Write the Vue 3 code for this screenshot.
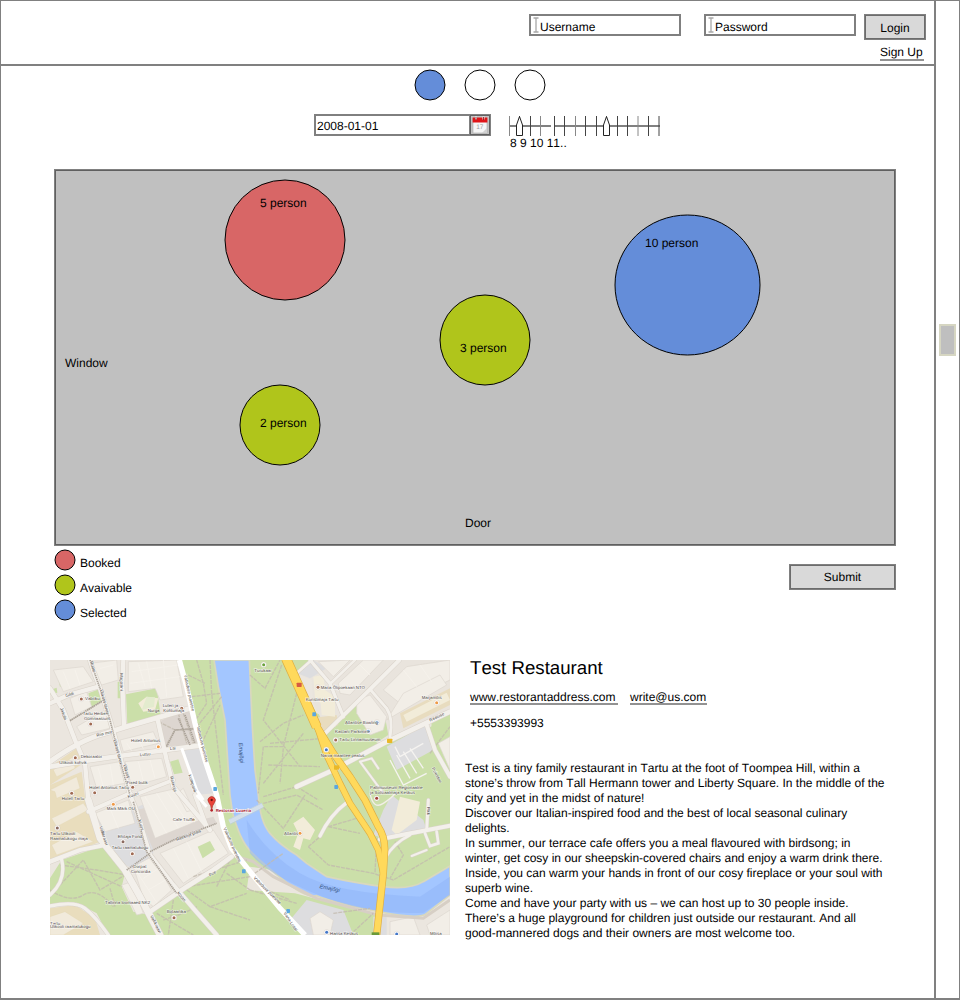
<script setup>
const description = [
  'Test is a tiny family restaurant in Tartu at the foot of Toompea Hill, within a',
  'stone’s throw from Tall Hermann tower and Liberty Square. In the middle of the',
  'city and yet in the midst of nature!',
  'Discover our Italian-inspired food and the best of local seasonal culinary',
  'delights.',
  'In summer, our terrace cafe offers you a meal flavoured with birdsong; in',
  'winter, get cosy in our sheepskin-covered chairs and enjoy a warm drink there.',
  'Inside, you can warm your hands in front of our cosy fireplace or your soul with',
  'superb wine.',
  'Come and have your party with us – we can host up to 30 people inside.',
  'There’s a huge playground for children just outside our restaurant. And all',
  'good-mannered dogs and their owners are most welcome too.',
]
const legend = [
  { name: 'Booked', kind: 'booked' },
  { name: 'Avaivable', kind: 'free' },
  { name: 'Selected', kind: 'selected' },
]
const ticks = [0.5, 10.5, 21.5, 31.5, 45.5, 55.5, 66.5, 76.5, 87.5, 97.5, 108.5, 118.5, 129, 139.5, 150]
const streets = [
  { d: 'M120 0 Q125 20 150 85 L180 180 200 250 240 405 255 440 300 585 370 675 430 745 500 825', w: 13 },
  { d: 'M220 0 L217 70 222 200', w: 13 },
  { d: 'M0 85 L40 150 75 240 105 310 115 420', w: 13 },
  { d: 'M0 305 Q90 240 165 220 L230 200 420 145', w: 15 },
  { d: 'M0 320 L110 302 230 285 455 256', w: 14 },
  { d: 'M0 130 L55 105 145 80', w: 13 },
  { d: 'M323 180 L350 300 370 380 480 510', w: 13 },
  { d: 'M240 410 L370 360', w: 11 },
  { d: 'M115 420 L150 535 165 555 225 630 270 710 330 825', w: 20 },
  { d: 'M0 605 L90 570 165 555', w: 13 },
  { d: 'M115 455 L240 400', w: 12 },
  { d: 'M435 405 L470 500', w: 12 },
  { d: 'M545 590 L490 630 410 680 300 755', w: 14 },
  { d: 'M0 705 Q50 660 35 600', w: 10 },
  { d: 'M0 738 Q75 722 105 745 T175 825', w: 10 },
  { d: 'M740 380 L850 330 1000 250 1200 155', w: 14 },
  { d: 'M825 220 L960 88 1048 0', w: 12 },
  { d: 'M780 0 L840 70 880 170', w: 10 },
  { d: 'M740 40 L785 0', w: 8 },
  { d: 'M840 72 L915 0', w: 8 },
  { d: 'M960 88 L1010 145 Q1030 175 1020 230', w: 9 },
  { d: 'M1130 195 L1155 270 1200 350', w: 12 },
  { d: 'M990 538 L1070 522 1200 497', w: 12 },
  { d: 'M1005 595 Q1030 550 1080 525', w: 8 },
  { d: 'M1135 420 L1130 510', w: 9 },
  { d: 'M810 528 Q840 465 890 428', w: 10 },
  { d: 'M1125 520 L1140 558 1165 550 1160 515', w: 8 },
  { d: 'M1085 588 L1130 570', w: 6 },
  { d: 'M930 305 L1000 400 M930 305 L965 295 985 325', w: 6 },
]
const paths = [
  'M480 0 L485 100 520 405', 'M415 45 L465 70 M425 110 L510 100 M440 200 L515 110 M430 190 L470 130 460 70 440 0 M455 250 L510 135',
  'M60 182 L165 118', 'M325 185 L375 210 345 262 M375 210 L430 205 M385 160 L410 250 M400 160 L430 250',
  'M600 45 L645 85 690 0 M695 15 L640 180 750 320 M740 100 L700 260 640 260 625 400 M630 245 L700 190 760 165 M640 370 L760 220 M655 315 L810 320 M660 250 L820 235 M700 265 L690 370 M640 410 L740 380 805 420',
  'M30 615 L140 630 230 645 M30 675 L100 600 150 690 225 645 M50 605 L215 680 M180 685 L195 740 M0 690 Q60 730 100 705 T190 740',
  'M410 680 L600 650 700 580 M430 650 L590 600 M500 680 L540 600 M410 690 L480 740 590 700 M320 760 L430 825 M370 720 L355 825 M340 780 L400 760 440 740 M480 740 L600 780 M530 640 L600 690',
  'M620 420 L700 505 765 405 M640 430 L740 405 820 450 M835 500 L930 520 M835 500 L920 475 960 510 M775 560 L835 615 970 640 1030 660 1200 560 M775 560 L810 530 M980 535 L975 640 M1035 545 L1060 585 1020 655',
  'M600 690 L740 730 M650 690 L720 720 M850 760 L960 745 M900 825 L970 760', 'M1140 280 L1200 200',
]
const labels = [
  [105, 120, 'Vabriku'], [98, 166, 'Tartu Herbert'], [102, 180, 'Gümnaasium'], [140, 230, 'Riia mnt', -12],
  [338, 142, 'Luteri ja'], [293, 155, 'Nurga'], [340, 157, 'Kohtumaja'], [243, 247, 'Hotell Antonius'],
  [92, 295, 'Dekoraator'], [28, 313, 'Ülikooli kohvik'], [118, 386, 'Hotel Antonius Tartu'], [230, 371, 'Fixed butik'],
  [35, 420, 'Hotell Tartu'], [170, 451, 'Mark Märk OÜ'], [368, 482, 'Cafe Truffe'], [0, 526, 'Tartu Ülikooli'], [0, 540, 'Raamatukogu maja'],
  [203, 534, 'Ehitaja Fond'], [185, 566, 'Tartu raamatukogu'], [250, 625, 'Dorpat'], [242, 638, 'Concordia'],
  [165, 732, 'Tallinna loomaaed NK2'], [350, 759, 'Botaanika'], [0, 794, 'Tartu'], [0, 805, 'Ülikooli raamatukogu'],
  [613, 35, 'Turukaar'], [812, 86, 'Maria Õlipoekaan NTO'], [767, 122, 'Kunstimaja Tartu'], [1115, 116, 'Marjamõis'],
  [885, 192, 'Atlantise Bowling'], [855, 219, 'Kastani Parkimine'], [868, 244, 'Tartu Linnamuuseum'], [812, 290, 'Narva maantee peatus'],
  [960, 388, 'Pallimuuseum Regionaalne'], [960, 401, 'ja Sotsiaalmaja Keskus'], [702, 524, 'Atlantis'], [840, 824, 'Hansa Keskus'], [1140, 824, 'Mõisa'],
]
const roadNames = [
  [402, 45, 'Vabaduse puiestee', 78], [440, 200, 'Vabaduse puiestee', 76], [520, 505, 'Vabaduse puiestee', 66],
  [610, 655, 'Vabaduse puiestee', 45], [700, 760, 'Vana-Lossi', 56], [150, 90, 'Ülikooli tänav', 75], [190, 240, 'Ülikooli tänav', 75],
  [220, 315, 'Ülikooli', 76], [265, 480, 'Küüni', 76], [210, 40, 'Magasini', 89], [30, 145, 'Jakobi', 70], [48, 112, 'Gildi', -20],
  [120, 5, 'Rüütli', 75], [270, 289, 'Lutsu', -6], [360, 270, 'Lai', -6], [360, 350, 'Raekoja', 75], [415, 345, 'Kompanii', 72],
  [148, 500, 'Vallikraavi', 72], [300, 768, 'Vallikraavi', 63], [380, 700, 'Küütri', 50], [380, 543, 'Raekoja plats', -20],
  [480, 650, 'Poe', -30], [1140, 185, 'Raatuse', -25], [1145, 325, 'Puiestee', 62], [1130, 440, 'Pikk', 90], [235, 415, 'Küütri', -20],
]
const pins = [
  [94, 117, '#a06a52'], [122, 192, '#a06a52'], [325, 260, '#ee9a46'], [76, 293, '#a06a52'], [65, 400, '#a06a52'], [248, 382, '#a06a52'],
  [134, 398, '#a06a52'], [190, 433, '#ee9a46'], [430, 479, '#ee9a46'], [22, 504, '#8c6a60'], [219, 545, '#8c6a60'], [247, 581, '#a06a52'],
  [372, 773, '#a06a52'], [395, 145, '#a06a52'], [641, 14, '#6aa13c'], [804, 82, '#a06a52'], [1160, 128, '#ee9a46'],
  [981, 187, '#4d92d8'], [955, 214, '#4d92d8'], [857, 240, '#a06a52'], [829, 269, '#4377c8'], [980, 415, '#a04038'], [750, 520, '#ee9a46'],
  [830, 817, '#4377c8'], [1040, 822, '#4377c8'],
]
const buildings = [
  'M120 10 L200 0 205 60 155 75Z', 'M235 5 L380 0 400 110 330 120 315 85 235 95Z', 'M10 30 L100 20 130 65 40 95Z',
  'M60 115 L110 95 125 140 75 165Z', 'M80 200 L165 150 180 205 95 225Z', 'M210 240 L310 215 325 250 220 275Z',
  'M120 320 L210 305 225 370 140 385Z', 'M225 305 L335 295 350 350 245 380Z', 'M135 460 L235 420 255 490 165 515Z',
  'M270 410 L380 385 450 480 315 535Z', 'M330 580 L490 510 535 580 400 670Z', 'M250 620 L305 590 365 690 310 740 280 715Z',
  'M215 675 L245 665 280 760 260 765Z', 'M400 385 L430 450 410 455 380 400Z', 'M805 5 L900 0 850 50Z', 'M865 70 L940 0 1000 0 900 105 870 100Z',
  'M1000 90 L1070 20 1200 0 1200 60 1050 130Z', 'M920 120 L960 105 1010 170 1000 210 960 225 920 160Z', 'M1060 100 L1170 45 1190 75 1010 180Z',
  'M1165 250 L1200 230 1200 330Z', 'M1020 785 L1090 770 1110 825 1020 825Z', 'M1130 795 L1200 750 1200 825 1140 825Z', 'M780 775 L810 755 850 780 840 825 790 825Z',
]
</script>

<template>
  <div class="page">
    <main class="main">
      <header class="topbar">
        <div class="row">
          <div v-for="f in ['Username', 'Password']" :key="f" class="box field">
            <svg class="caret" width="6" height="16" viewBox="0 0 6 16"><path d="M.5 1H5.5M.5 15H5.5M3 1V15" /></svg>
            <span>{{ f }}</span>
          </div>
          <button class="box btn login">Login</button>
        </div>
        <a class="link signup">Sign Up</a>
      </header>

      <div class="steps">
        <svg v-for="n in 3" :key="n" width="32" height="32"><circle cx="16" cy="16" r="15" :class="n === 1 ? 'selected' : 'blank'" /></svg>
      </div>

      <div class="when">
        <div class="box date">
          <span>2008-01-01</span>
          <div class="box cal">
            <svg width="18" height="18" viewBox="0 0 18 18">
              <rect x="2" y="3" width="14" height="14" fill="#f6f6f6" stroke="#aaa" stroke-width=".6" />
              <rect x="1.6" y="1.5" width="14.8" height="5" fill="#e01518" />
              <path d="M5 .5V3.5M12.5 .5V3.5" stroke="#eee" stroke-width="2" />
              <path d="M5 1V4M12.5 1V4" stroke="#701010" stroke-width=".8" />
              <text x="5.2" y="13" font-size="6.5" fill="#999">17</text>
              <path d="M11 17L16 12V17Z" fill="#d2d2d2" />
            </svg>
          </div>
        </div>
        <div class="hours">
          <svg width="154" height="22" viewBox="0 0 154 22">
            <path d="M0 11H42M46 11H151" stroke="#808080" stroke-width="2" />
            <path v-for="(t, i) in ticks" :key="t" :d="`M${t} 1V21`" :stroke="i % 3 ? '#444' : '#888'" />
            <path v-for="x in [10.5, 97.5]" :key="x" :d="`M${x - 3} 20.5V10L${x} 1.5L${x + 3} 10V20.5Z`" fill="#fff" stroke="#222" />
          </svg>
          <span>8 9 10 11..</span>
        </div>
      </div>

      <section class="box room">
        <svg class="tables" width="840" height="375">
          <circle cx="230" cy="70" r="60" class="booked" />
          <ellipse cx="632.5" cy="115" rx="72.5" ry="70" class="selected" />
          <circle cx="430" cy="170" r="45" class="free" />
          <circle cx="225" cy="255" r="40" class="free" />
          <text x="205" y="37">5 person</text>
          <text x="590" y="77">10 person</text>
          <text x="405" y="182">3 person</text>
          <text x="205" y="257">2 person</text>
          <text x="10" y="197">Window</text>
          <text x="410" y="357">Door</text>
        </svg>
      </section>

      <div class="under">
        <ul class="legend">
          <li v-for="l in legend" :key="l.name">
            <svg width="22" height="22"><circle cx="11" cy="11" r="10" :class="l.kind" /></svg>
            <span>{{ l.name }}</span>
          </li>
        </ul>
        <button class="box btn submit">Submit</button>
      </div>

      <div class="about">
        <svg class="map" width="400" height="275" viewBox="0 0 1200 825">
          <rect width="1200" height="825" fill="#ebe6df" />
          <g fill="#cbdfa9">
            <path d="M395 0H1000L740 40 750 70 800 160 860 180 850 225 900 230 1000 250 1200 180V620L1110 700 600 620 590 690 735 720 770 825H320L300 755 410 680 550 590 500 405 455 250Z" />
            <path d="M228 103 L320 85 332 165 232 193Z M25 60 L70 45 75 68 30 80Z M0 90 L20 83 22 98 0 103Z M115 100 L155 85 160 118 125 142Z M203 65H213V115H203Z M360 305 L385 298 398 338 372 343Z" />
            <path d="M0 655 L35 600 165 555 180 575 225 640 215 680 250 755 300 765 325 825H175L140 760 80 728 0 740Z" />
            <path d="M590 690 L735 700 980 765 970 825H720L590 690Z" />
          </g>
          <path d="M740 40 L790 0H1200V155L1000 250 850 240 880 170 820 190 790 130 785 60Z" fill="#e9e4dd" />
          <path d="M875 170 L930 115 1005 170 1015 225 960 260 850 320 820 260Z" fill="#cbdfa9" />
          <path d="M1140 270 L1145 185 1200 155V270L1155 280Z" fill="#cbdfa9" />
          <path d="M400 260 L455 256 490 400 440 405Z M240 450 L300 425 310 580 260 630 225 615 180 555 130 455 225 495Z M1010 260 L1125 195 1150 270 1040 330Z M742 40 L790 0 830 25 780 55Z M1025 405 L1120 480 1130 510 1000 535 970 525 1000 450Z M770 720 L880 750 910 825 760 825 720 780Z M970 770H1010V825H970Z" fill="#dddddf" />
          <path d="M260 450 L300 440 330 510 490 470 500 490 310 570Z M325 185 L415 145 450 250 350 265Z" fill="#ddd6d0" />
          <path d="M0 320 L80 265 100 310 0 375Z M0 375 L95 335 110 450 145 495 150 545 0 605Z M0 745 L75 735 135 775 150 825H0Z" fill="#e9ddbd" />
          <path d="M10 330 L70 290 75 325 20 350Z M0 390 L80 350 90 385 20 415 15 395Z M5 475 L100 430 115 450 20 500Z M5 555 L80 515 130 545 20 585Z M0 770 L45 755 100 790 40 825H0Z" fill="#f1eadb" stroke="#e1d4b1" />
          <path d="M780 175 L860 165 865 195 815 215Z M1050 160 L1200 85V135L1060 205Z" fill="#e8dcbf" />
          <path d="M790 50 L820 45 825 90 855 110 855 170 815 165 812 130 795 115Z M1060 165 L1190 98 1200 120 1070 185Z M1050 410 L1110 425 1100 480 1040 525 1025 510Z M730 490 L760 470 795 510 780 540 760 535 750 570 730 560 745 520Z M265 130 L290 110 325 115 315 150 280 155Z" fill="#f2ecd9" />
          <g fill="#f2eee7" stroke="#ddd6ce" stroke-width="2"><path v-for="b in buildings" :key="b" :d="b" /></g>
          <path d="M443 560 L480 543 495 570 458 595Z M1137 528 L1150 524 1155 543 1142 548Z" fill="#cbdfa9" />
          <path d="M290 110 L315 112 312 140 275 150Z" fill="#e3ebce" />
          <g fill="none" stroke="#f6f2ec" stroke-width="3" opacity=".8">
            <path d="M265 10L285 80M290 5L305 85M340 0L350 110M40 35L60 85M75 30L90 75M150 25L190 15M245 35L385 15M240 70L390 50M230 250L245 272M265 238L280 266M145 325L160 380M180 315L190 375M265 305L280 365M300 300L315 355M285 410L350 520M320 400L385 505M350 395L415 490M370 565L415 655M410 545L455 635M260 635L325 735M280 655L335 620M295 690L355 655M180 445L205 505M930 15L960 45M1060 30L1100 80M1110 15L1145 65" />
          </g>

          <path d="M492 0L505 80 525 180 533 300 540 405 548 460Q570 540 600 572T700 660T800 707Q860 730 985 755T1130 760L1200 705V618L1120 665Q1080 690 1000 680T830 650L770 610 740 585Q690 555 660 520T625 405L615 330 607 200 598 0Z" fill="#a3c6ff" stroke="#d9d8bd" stroke-width="5" />
          <path d="M600 580Q650 640 800 703T1120 758L1200 705V650L1110 710Q850 700 750 640T590 480Z" fill="#8fb3f8" opacity=".5" />
          <path d="M545 585L610 605 670 650 800 715 985 765 1120 775 1200 720" fill="none" stroke="#d7cfc5" stroke-width="9" />
          <g fill="none" stroke="#c3bbae" stroke-width="4" stroke-dasharray="12 3" opacity=".8"><path v-for="p in paths" :key="p" :d="p" /></g>
          <g fill="none" stroke-linecap="round">
            <path v-for="s in streets" :key="s.d" :d="s.d" :stroke-width="s.w + 3" stroke="#dad3ca" />
            <path v-for="s in streets" :key="s.d" :d="s.d" :stroke-width="s.w" stroke="#f3f0eb" />
          </g>
          <path d="M120 0L150 85 180 180 215 320 240 405M250 425L290 575 380 700M300 575L370 540 500 490M230 630L300 580M60 182L165 118M385 175L420 255M405 165L435 250M350 260L375 210 430 207" fill="none" stroke="#aaa298" stroke-width="5" stroke-dasharray="4 2" />
          <path d="M388 0L410 80 435 190 465 300 500 405 520 500 545 565 600 635 690 745 765 825" fill="none" stroke="#fff" stroke-width="16" />
          <path d="M395 265L440 390 460 420M440 405L470 440" fill="none" stroke="#fff" stroke-width="9" />
          <path d="M538 485L638 435" stroke="#d3dfea" stroke-width="14" />
          <path d="M538 478L636 429M540 493L640 443" stroke="#b9cbdc" stroke-width="2" />
          <path d="M1020 300L1060 375 1130 340M1040 285L1080 355M1060 275L1100 340M1080 265L1120 325M1035 260L1050 290 1120 250" fill="none" stroke="#f5f3f0" stroke-width="4" />
          <path d="M960 400Q970 450 1000 430T1035 400" fill="#cbdfa9" stroke="#f2eee7" stroke-width="4" />
          <g fill="none" stroke-linejoin="round">
            <g stroke="#dfae43">
              <path d="M708 -5L760 110 800 200" stroke-width="30" />
              <path d="M795 190L850 280 900 350 945 420 985 500Q1005 530 1004 570L1000 640 980 825" stroke-width="22" />
              <path d="M800 195L830 285 870 370 900 430 960 520 985 570 1000 640" stroke-width="20" />
            </g>
            <g stroke="#ffd95b">
              <path d="M708 -5L760 110 800 200" stroke-width="26" />
              <path d="M795 190L850 280 900 350 945 420 985 500Q1005 530 1004 570L1000 640 980 825" stroke-width="18" />
              <path d="M800 195L830 285 870 370 900 430 960 520 985 570 1000 640" stroke-width="16" />
            </g>
          </g>
          <path d="M965 817H988V825H965Z" fill="#6b9a38" />
          <g><rect x="740" y="68" width="15" height="13" rx="2" fill="#d65b43" /><rect x="1011" y="236" width="16" height="13" rx="2" fill="#e9b828" /><rect x="852" y="316" width="16" height="13" rx="2" fill="#e9b828" /></g>
          <g fill="#5aa7df"><rect x="787" y="157" width="11" height="12" rx="2" /><rect x="853" y="375" width="11" height="12" rx="2" /><rect x="490" y="381" width="11" height="12" rx="2" /><rect x="576" y="628" width="11" height="12" rx="2" /><rect x="709" y="747" width="11" height="12" rx="2" /></g>
          <g v-for="(p, i) in pins" :key="i"><circle :cx="p[0]" :cy="p[1]" r="8" fill="#fff" stroke="#c9bdb3" /><circle :cx="p[0]" :cy="p[1]" r="4.5" :fill="p[2]" /></g>
          <g class="names">
            <text v-for="(l, i) in labels" :key="i" :transform="`translate(${l[0]} ${l[1]}) rotate(${l[3] || 0})`">{{ l[2] }}</text>
            <text v-for="(l, i) in roadNames" :key="'r' + i" :transform="`translate(${l[0]} ${l[1]}) rotate(${l[3]})`">{{ l[2] }}</text>
          </g>
          <g class="river"><text transform="translate(566 248) rotate(86)">Emajõgi</text><text transform="translate(808 684) rotate(12)">Emajõgi</text></g>
          <path d="M485 450Q483 435 476 427A11 11 0 1 1 494 427Q487 435 485 450Z" fill="#e94339" stroke="#a92d27" stroke-width="2" />
          <circle cx="485" cy="420" r="3.5" fill="#66130f" /><circle cx="485" cy="451" r="4" fill="#b6232b" />
          <text x="497" y="455" class="place">Restoran Luxeria</text>
        </svg>

        <article class="info">
          <h1>Test Restaurant</h1>
          <div class="contacts"><a class="link site">www.restorantaddress.com</a><a class="link mail">write@us.com</a></div>
          <div class="phone">+5553393993</div>
          <div class="text"><div v-for="line in description" :key="line">{{ line }}</div></div>
        </article>
      </div>
    </main>
    <aside class="scroll"><div class="thumb"></div></aside>
  </div>
</template>

<style>
body { background: #fff; }
</style>
<style scoped>
.page {
  display: flex;
  box-sizing: border-box;
  width: 960px;
  height: 1000px;
  border: 1px solid #808080;
  border-bottom: 2px solid #808080;
  font: 12px/15px "Liberation Sans", Arial, sans-serif;
  font-kerning: none;
  text-rendering: geometricPrecision;
  color: #000;
  overflow: hidden;
}
.main { width: 933px; flex: none; border-right: 2px solid #808080; }
.box { box-sizing: border-box; border: 1px solid #808080; box-shadow: inset 0 0 0 1px rgba(0, 0, 0, .5); }
.topbar {
  box-sizing: border-box;
  height: 65px;
  padding: 13px 8px 0 0;
  border-bottom: 2px solid #808080;
  display: flex;
  flex-direction: column;
  align-items: flex-end;
}
.row { display: flex; align-items: flex-start; }
.field { width: 152px; height: 22px; margin-right: 23px; display: flex; align-items: center; padding: 3px 0 0 3px; }
.field:nth-child(2) { margin-right: 8px; }
.field span { margin: 2px 0 0 1px; }
.caret { margin-top: -4px; flex: none; }
.caret path { stroke: #a8a8a8; fill: none; stroke-width: 1.3; }
.btn { background: #d9d9d9; font: inherit; font-kerning: none; text-rendering: inherit; color: inherit; padding: 2px 0 0; }
.login { width: 62px; height: 26px; }
.link { display: inline-block; box-sizing: border-box; height: 17px; border-bottom: 2px solid #929292; }
.signup { width: 44px; margin: 4px 2px 0 0; height: 17px; line-height: 17px; }
.steps { display: flex; gap: 18px; padding: 3px 0 0 413px; }
svg { display: block; }
circle, ellipse { stroke-width: 1; }
.blank { fill: #fff; stroke: #000; }
.selected { fill: #648dd9; stroke: #000; }
.booked { fill: #d86666; stroke: #000; }
.free { fill: #b0c51b; stroke: #000; }
.when { display: flex; padding: 13px 0 0 313px; height: 68px; box-sizing: border-box; }
.date { width: 177px; height: 22px; display: flex; justify-content: space-between; align-items: center; }
.date span { padding: 2px 0 0 2px; }
.cal { width: 22px; height: 22px; margin-right: -1px; background: #c4c4c4; padding: 1px; }
.hours { margin: 1px 0 0 18px; }
.hours span { display: block; margin: -1px 0 0 1px; }
.room { width: 842px; height: 377px; margin-left: 53px; background: #c0c0c0; }
.under { box-sizing: border-box; display: flex; justify-content: space-between; align-items: flex-start; height: 114px; padding: 3px 38px 0 53px; }
.legend { list-style: none; margin: 0; padding: 0; }
.legend li { display: flex; align-items: center; height: 22px; margin-bottom: 3px; gap: 4px; }
.legend span { padding-top: 7px; }
.submit { width: 107px; height: 26px; margin-top: 15px; padding-top: 1px; }
.about { display: flex; padding-left: 49px; }
.map { flex: none; overflow: hidden; }
.names text { font-size: 13px; fill: #4b4540; stroke: #fff; stroke-width: 3px; paint-order: stroke; stroke-opacity: .7; }
.river text { font-size: 17px; font-style: italic; fill: #34517e; }
.place { font-size: 13px; font-weight: bold; fill: #a8172b; stroke: #fff; stroke-width: 3px; paint-order: stroke; }
.info { padding-left: 15px; }
h1 { font-size: 18.67px; line-height: 22px; font-weight: normal; margin: -3px 0 0 5px; }
.contacts { display: flex; margin: 10px 0 0 5px; }
.site { width: 148px; margin-right: 12px; }
.mail { width: 77px; }
.contacts, .contacts .link { height: 16px; line-height: 16px; }
.phone { margin: 11px 0 0 5px; }
.text { margin-top: 30px; white-space: nowrap; }
.scroll { flex: 1; padding: 323px 0 0 3px; }
.thumb { width: 13px; height: 28px; background: #bfbfbf; border: 2px solid #d6d6c2; }
</style>
